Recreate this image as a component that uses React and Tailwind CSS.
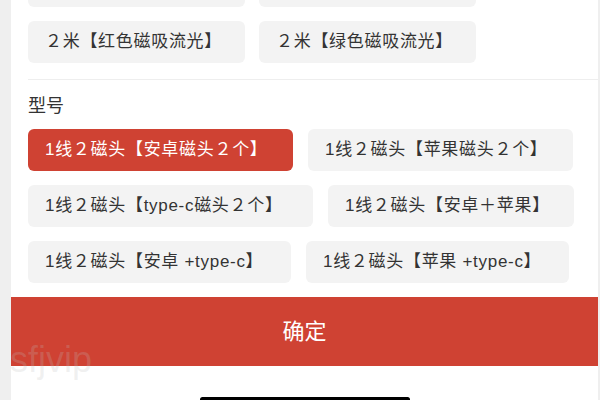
const colorRows = [
  [
    { label: "", w: "w-[217px]" },
    { label: "", w: "w-[217px]" },
  ],
  [
    { label: "２米【红色磁吸流光】", w: "w-[217px]" },
    { label: "２米【绿色磁吸流光】", w: "w-[217px]" },
  ],
];

const models = [
  { label: "1线２磁头【安卓磁头２个】", w: "w-[265px]", active: true },
  { label: "1线２磁头【苹果磁头２个】", w: "w-[265px]" },
  { label: "1线２磁头【type-c磁头２个】", w: "w-[285px]" },
  { label: "1线２磁头【安卓＋苹果】", w: "w-[246px]" },
  { label: "1线２磁头【安卓 +type-c】", w: "w-[263px]" },
  { label: "1线２磁头【苹果 +type-c】", w: "w-[263px]" },
  // next row, only its top edge peeks out above the confirm bar
  { label: "", w: "w-[265px]" },
  { label: "", w: "w-[265px]" },
];

const Option = ({ label, w, active }) => (
  <button
    className={`${w} h-[42px] shrink-0 flex items-center rounded-[6px] pl-[17px] text-left text-[17px] tracking-[0.7px] whitespace-nowrap ${
      active ? "bg-[#cf4233] text-white" : "bg-[#f3f3f3] text-[#333333]"
    }`}
  >
    {label}
  </button>
);

export default function App() {
  return (
    <div
      className="relative flex w-[600px] h-[400px] overflow-hidden bg-[#efefef]"
      style={{ fontFamily: '"Liberation Sans", "Noto Sans CJK SC", sans-serif' }}
    >
      <div className="w-[11px] shrink-0" />

      <div className="flex flex-1 flex-col bg-white">
        {/* scrolling content */}
        <div className="flex-1 overflow-hidden">
          <div className="-mt-[35px] pl-[17px]">
            <div className="flex flex-col gap-[14px] pb-[16px]">
              {colorRows.map((row, i) => (
                <div key={i} className="flex gap-[14px]">
                  {row.map((o, j) => (
                    <Option key={j} {...o} />
                  ))}
                </div>
              ))}
            </div>

            <div className="border-t border-[#eeeeee]" />

            <div className="pt-[13px] pr-[17px]">
              <div className="mb-[10px] text-[18px] leading-[26px] text-[#333333]">型号</div>
              <div className="flex flex-wrap gap-x-[15px] gap-y-[14px]">
                {models.map((o, i) => (
                  <Option key={i} {...o} />
                ))}
              </div>
            </div>
          </div>
        </div>

        {/* confirm */}
        <button className="h-[69px] shrink-0 bg-[#cf4233] text-[22px] text-white">确定</button>

        {/* home indicator area */}
        <div className="h-[34px] shrink-0 pt-[31px] flex justify-center">
          <div className="w-[210px] h-[5px] rounded-full bg-black" />
        </div>
      </div>

      <div className="w-[2px] shrink-0" />

      {/* watermark */}
      <div className="pointer-events-none absolute left-[10px] top-[342px] text-[36px] leading-[36px] text-[rgba(190,190,190,0.22)]">
        sfjvip
      </div>
    </div>
  );
}
